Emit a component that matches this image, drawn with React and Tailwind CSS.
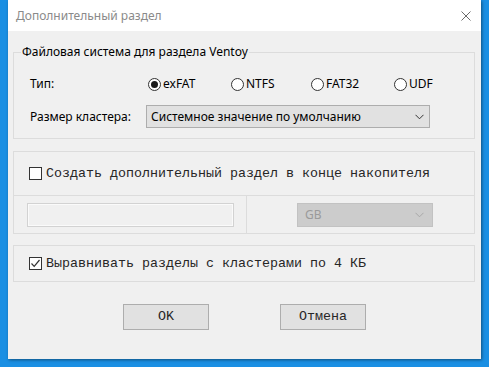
import React from "react";

const sans = "font-['Segoe_UI','Noto_Sans',sans-serif] text-[12px]";
const mono = "font-['Liberation_Mono','Courier_New',monospace] text-[13.33px] font-normal";

const Radio = ({ checked, label, width }) => (
  <div className="flex items-center gap-[2px]" style={{ width }}>
    <span className="w-[13px] h-[13px] rounded-full border border-[#333] bg-white flex items-center justify-center">
      {checked && <span className="w-[7px] h-[7px] rounded-full bg-[#1a1a1a]" />}
    </span>
    <span className="text-black leading-none">{label}</span>
  </div>
);

const Checkbox = ({ checked, label }) => (
  <div className="flex items-center gap-[4px]">
    <span className="w-[13px] h-[13px] border border-[#333] bg-white flex items-center justify-center">
      {checked && (
        <svg width="11" height="11" viewBox="0 0 11 11">
          <path d="M1.5 5.5 L4.2 8.3 L9.5 2" fill="none" stroke="#333" strokeWidth="1.2" />
        </svg>
      )}
    </span>
    <span className={`${mono} text-[#262626] leading-none`}>{label}</span>
  </div>
);

const Chevron = ({ color }) => (
  <svg width="9" height="6" viewBox="0 0 9 6">
    <path d="M0.5 0.8 L4.5 4.8 L8.5 0.8" fill="none" stroke={color} strokeWidth="1" />
  </svg>
);

export default function App() {
  return (
    <div className="min-h-screen w-full bg-[#1a8fe3] pl-[8px]">
      <div className="w-[473px] h-[359px] bg-[#f0f0f0] flex flex-col shadow-[1px_1px_3px_rgba(0,0,0,0.45)]">
        {/* title bar */}
        <div className="h-[31px] bg-white flex items-center justify-between pl-[8px] pr-[10px]">
          <span className={`${sans} text-[#8a8a8a]`}>Дополнительный раздел</span>
          <svg width="10" height="10" viewBox="0 0 10 10">
            <path d="M0.5 0.5 L9.5 9.5 M9.5 0.5 L0.5 9.5" stroke="#6b6b6b" strokeWidth="1" />
          </svg>
        </div>

        {/* body */}
        <div className="flex flex-col pl-[5px]">
          <fieldset className={`${sans} mt-[13px] w-[462px] border border-[#dcdcdc] px-[16px] pt-[14px] pb-[10px]`}>
            <legend className="ml-[-9px] px-[1px] leading-[16px] text-black">
              Файловая система для раздела Ventoy
            </legend>
            <div className="flex items-center h-[20px]">
              <span className="w-[118px] text-black">Тип:</span>
              <Radio checked label="exFAT" width={83} />
              <Radio label="NTFS" width={80} />
              <Radio label="FAT32" width={83} />
              <Radio label="UDF" width={40} />
            </div>
            <div className="flex items-center mt-[11px] h-[23px]">
              <span className="w-[116px] text-black">Размер кластера:</span>
              <div className="w-[284px] h-[23px] bg-[#e1e1e1] border border-[#adadad] flex items-center justify-between pl-[4px] pr-[5px]">
                <span className="text-black">Системное значение по умолчанию</span>
                <Chevron color="#333" />
              </div>
            </div>
          </fieldset>

          <div className="mt-[12px] w-[462px] border border-[#dcdcdc] flex flex-col">
            <div className="h-[44px] border-b border-[#dcdcdc] flex items-center pl-[15px] pt-[1px]">
              <Checkbox label="Создать дополнительный раздел в конце накопителя" />
            </div>
            <div className="h-[37px] flex">
              <div className="w-[233px] border-r border-[#dcdcdc] flex items-center pl-[13px]">
                <div className="w-[207px] h-[24px] border border-[#d2d2d2] bg-[#f0f0f0] shadow-[inset_0_0_0_1px_#fafafa]" />
              </div>
              <div className="flex-1 flex items-center pl-[50px]">
                <div className={`${sans} w-[136px] h-[24px] bg-[#cccccc] border border-[#c2c2c2] flex items-center justify-between pl-[7px] pr-[8px]`}>
                  <span className="text-[#9a9a9a]">GB</span>
                  <Chevron color="#a8a8a8" />
                </div>
              </div>
            </div>
          </div>

          <div className="mt-[11px] w-[462px] h-[37px] border border-[#dcdcdc] flex items-center pl-[15px]">
            <Checkbox checked label="Выравнивать разделы с кластерами по 4 КБ" />
          </div>

          <div className="mt-[22px] flex pl-[110px] gap-[71px]">
            <button className={`${mono} w-[86px] h-[26px] bg-[#e1e1e1] border border-[#adadad] text-[#262626]`}>
              OK
            </button>
            <button className={`${mono} w-[86px] h-[26px] bg-[#e1e1e1] border border-[#adadad] text-[#262626]`}>
              Отмена
            </button>
          </div>
        </div>
      </div>
    </div>
  );
}
